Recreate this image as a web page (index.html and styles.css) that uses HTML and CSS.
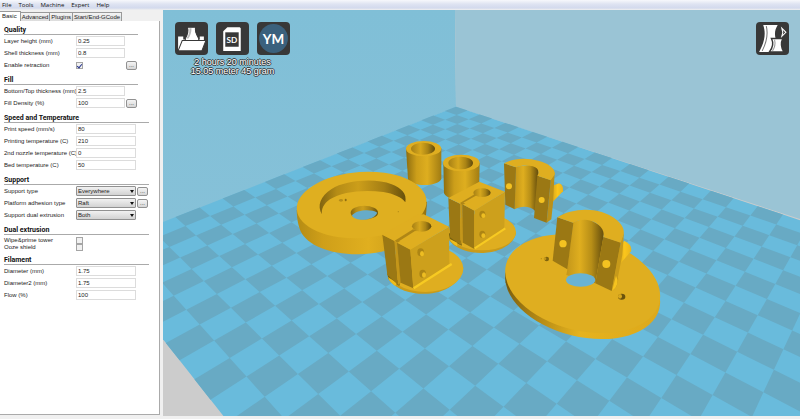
FILE: index.html
```html
<!DOCTYPE html>
<html lang="en">
<head>
<meta charset="utf-8">
<title>Print settings</title>
<link rel="stylesheet" href="styles.css">
</head>
<body>
<nav class="menubar">
  <button type="button">File</button>
  <button type="button">Tools</button>
  <button type="button">Machine</button>
  <button type="button">Expert</button>
  <button type="button">Help</button>
</nav>
<main class="workspace">
  <aside class="sidebar">
    <div class="tabs" role="tablist">
      <button type="button" role="tab" class="tab active" aria-selected="true">Basic</button>
      <button type="button" role="tab" class="tab">Advanced</button>
      <button type="button" role="tab" class="tab">Plugins</button>
      <button type="button" role="tab" class="tab">Start/End-GCode</button>
    </div>
    <form class="panel">
      <section class="group narrow">
        <h2>Quality</h2>
        <div class="row"><label for="layer">Layer height (mm)</label><input id="layer" type="text" value="0.25"></div>
        <div class="row"><label for="shell">Shell thickness (mm)</label><input id="shell" type="text" value="0.8"></div>
        <div class="row"><label for="retract">Enable retraction</label><input id="retract" type="checkbox" checked><button type="button" class="more" aria-label="Retraction settings">...</button></div>
      </section>
      <section class="group narrow">
        <h2>Fill</h2>
        <div class="row"><label for="bottom">Bottom/Top thickness (mm)</label><input id="bottom" type="text" value="2.5"></div>
        <div class="row"><label for="density">Fill Density (%)</label><input id="density" type="text" value="100"><button type="button" class="more" aria-label="Fill settings">...</button></div>
      </section>
      <section class="group">
        <h2>Speed and Temperature</h2>
        <div class="row"><label for="speed">Print speed (mm/s)</label><input id="speed" type="text" value="80"></div>
        <div class="row"><label for="temp">Printing temperature (C)</label><input id="temp" type="text" value="210"></div>
        <div class="row"><label for="temp2">2nd nozzle temperature (C)</label><input id="temp2" type="text" value="0"></div>
        <div class="row"><label for="bed">Bed temperature (C)</label><input id="bed" type="text" value="50"></div>
      </section>
      <section class="group">
        <h2>Support</h2>
        <div class="row"><label for="support">Support type</label><span class="drop"><select id="support"><option>Everywhere</option></select></span><button type="button" class="more" aria-label="Support settings">...</button></div>
        <div class="row"><label for="adhesion">Platform adhesion type</label><span class="drop"><select id="adhesion"><option>Raft</option></select></span><button type="button" class="more" aria-label="Adhesion settings">...</button></div>
        <div class="row"><label for="dual">Support dual extrusion</label><span class="drop"><select id="dual"><option>Both</option></select></span></div>
      </section>
      <section class="group tight">
        <h2>Dual extrusion</h2>
        <div class="row"><label for="wipe">Wipe&amp;prime tower</label><input id="wipe" type="checkbox"></div>
        <div class="row"><label for="ooze">Ooze shield</label><input id="ooze" type="checkbox"></div>
      </section>
      <section class="group">
        <h2>Filament</h2>
        <div class="row"><label for="dia">Diameter (mm)</label><input id="dia" type="text" value="1.75"></div>
        <div class="row"><label for="dia2">Diameter2 (mm)</label><input id="dia2" type="text" value="1.75"></div>
        <div class="row"><label for="flow">Flow (%)</label><input id="flow" type="text" value="100"></div>
      </section>
    </form>
  </aside>
  <section class="viewport">
    <svg class="scene" viewBox="163 10 637 406" preserveAspectRatio="xMinYMin slice" role="img" aria-label="Printer platform with seven parts">
      <defs>
        <linearGradient id="wallL" x1="0" y1="0" x2="0" y2="1"><stop offset="0" stop-color="#80bfd7"/><stop offset="1" stop-color="#86c1d8"/></linearGradient>
        <linearGradient id="rim"><stop offset="0" stop-color="#b48b14"/><stop offset=".2" stop-color="#cf9f19"/><stop offset=".55" stop-color="#e0af1f"/><stop offset=".9" stop-color="#c59818"/><stop offset="1" stop-color="#8f6e10"/></linearGradient>
        <linearGradient id="recess"><stop offset="0" stop-color="#806310"/><stop offset=".2" stop-color="#b58c16"/><stop offset=".45" stop-color="#cc9e1a"/><stop offset=".75" stop-color="#a47e14"/><stop offset="1" stop-color="#66500c"/></linearGradient>
        <linearGradient id="tube"><stop offset="0" stop-color="#8d6d10"/><stop offset=".3" stop-color="#cc9e1a"/><stop offset=".6" stop-color="#deae1f"/><stop offset="1" stop-color="#a17c13"/></linearGradient>
        <linearGradient id="bore"><stop offset="0" stop-color="#a68015"/><stop offset=".4" stop-color="#d6a71d"/><stop offset=".7" stop-color="#aa8415"/><stop offset="1" stop-color="#604a0b"/></linearGradient>
        <linearGradient id="half"><stop offset="0" stop-color="#c3961a"/><stop offset=".35" stop-color="#dfae1f"/><stop offset=".65" stop-color="#b78e17"/><stop offset=".9" stop-color="#765b0f"/><stop offset="1" stop-color="#5e490b"/></linearGradient>
        <linearGradient id="discSide"><stop offset="0" stop-color="#775b0d"/><stop offset=".25" stop-color="#ae8515"/><stop offset=".55" stop-color="#e6b31e"/><stop offset="1" stop-color="#dda91b"/></linearGradient>
        <linearGradient id="lug"><stop offset="0" stop-color="#d6a51b"/><stop offset=".5" stop-color="#fbc61c"/><stop offset="1" stop-color="#e9b51c"/></linearGradient>
      </defs>
      <rect x="163" y="10" width="637" height="406" fill="#ccc"/>
      <path fill="url(#wallL)" d="M163 10H455L456 107 163 223Z"/>
      <path fill="#9ac4d5" d="M455 10H800V219L456 107Z"/>
      <path id="floor" fill="#69bbdc"/>
      <path id="tiles" fill="#68aac4"/>

      <g transform="translate(280 130) scale(.33333)">
        <path fill="url(#tube)" d="M378 55L384 147C394 171 472 171 484 147L484 55Z"/>
        <ellipse cx="431" cy="56" rx="53" ry="23" fill="#dfae20"/>
        <ellipse cx="429" cy="56" rx="36" ry="18" fill="url(#bore)"/>
        <path fill="url(#tube)" d="M490 99L492 190C510 220 570 215 597 190L599 99Z"/>
        <ellipse cx="544" cy="99" rx="55" ry="25" fill="#dfae20"/>
        <ellipse cx="542" cy="99" rx="37" ry="19" fill="url(#bore)"/>

        <path fill="url(#rim)" d="M50 240C51 272 56 290 62 304C80 345 150 374 235 373C330 371 420 335 436 282L441 215Z"/>
        <ellipse cx="245" cy="225" rx="195" ry="99" fill="#dfaf20" transform="rotate(-4 245 225)"/>
        <path fill="url(#recess)" d="M126 253C110 228 121 198 155 177C195 151 285 143 335 163C365 175 381 191 376 217C366 202 340 191 310 186C250 178 185 185 150 208C130 222 124 237 126 253Z"/>
        <ellipse cx="253" cy="248" rx="41" ry="21" fill="url(#recess)"/>
        <path fill="#66abc9" d="M216 256C228 240 272 235 292 248C284 264 262 270 242 269C228 268 218 264 216 256Z"/>
        <ellipse cx="183" cy="211" rx="6" ry="4" fill="#b68d18"/><ellipse cx="197" cy="210" rx="3" ry="4" fill="#8f6e12"/>
        <circle cx="355" cy="245" r="2" fill="#b68d18"/>

        <path fill="#c99b19" d="M505 310V328C525 358 570 370 610 369C670 366 706 335 708 306Z"/>
        <ellipse cx="607" cy="306" rx="101" ry="55" fill="#dfae20"/>
        <path fill="#77600f" d="M506 308L545 334V347L510 329Z"/>
        <path fill="#efbd1c" d="M508 326L532 338V349Q514 339 508 326Z"/>
        <path fill="#9b7814" d="M505 204L540 221 542 345 510 322Z"/>
        <path fill="#c4961a" d="M540 220L548 223 550 337 542 343Z"/>
        <path fill="#9b7814" d="M547 223L583 241 583 357 549 338Z"/>
        <path fill="#cda01c" d="M583 241L675 185 673 294 583 357Z"/>
        <path fill="#dfae20" d="M505 204L598 155 675 185 583 242 547 223 540 221Z"/>
        <path fill="#af8616" d="M540 219L585 192 597 198 547 225Z"/>
        <path fill="#dfae20" d="M550 218L590 196 604 200 560 223Z"/>
        <ellipse cx="606" cy="188" rx="26" ry="13" fill="url(#bore)"/>
        <path stroke="#f7ca22" stroke-width="6" d="M584 355L676 295"/>
        <g><ellipse cx="607" cy="253" rx="9" ry="11" fill="#ad8514"/><ellipse cx="610" cy="257" rx="6" ry="7" fill="#edbd22"/><ellipse cx="607" cy="313" rx="9" ry="11" fill="#ad8514"/><ellipse cx="610" cy="317" rx="6" ry="7" fill="#edbd22"/></g>

        <path fill="#c99b19" d="M322 430L326 449C355 483 400 494 445 491C510 487 547 447 550 412Z"/>
        <ellipse cx="436" cy="416" rx="114" ry="70" fill="#dfae20"/>
        <path fill="#77600f" d="M322 430L360 456 358 468 325 446Z"/>
        <path fill="#efbd1c" d="M323 441L351 458 346 468Q330 457 323 441Z"/>
        <path fill="#9b7814" d="M307 314L344 332 354 465 322 434Z"/>
        <path fill="#c4961a" d="M343 331L352 336 363 458 354 465Z"/>
        <path fill="#9b7814" d="M351 337L391 358 400 475 362 458Z"/>
        <path fill="#cda01c" d="M391 358L507 290 508 402 400 476Z"/>
        <path fill="#dfae20" d="M307 314L411 255 431 253 507 290 391 359 351 338 343 333Z"/>
        <path fill="#af8616" d="M344 332L399 298 412 302 352 338Z"/>
        <path fill="#dfae20" d="M358 333L405 303 423 306 371 341Z"/>
        <ellipse cx="425" cy="289" rx="29" ry="16" fill="url(#bore)"/>
        <path stroke="#f7ca22" stroke-width="7" d="M401 475L515 402"/>
        <g><ellipse cx="422" cy="367" rx="10" ry="12" fill="#ad8514"/><ellipse cx="426" cy="371" rx="6" ry="8" fill="#edbd22"/><ellipse cx="428" cy="431" rx="10" ry="12" fill="#ad8514"/><ellipse cx="432" cy="435" rx="6" ry="8" fill="#edbd22"/></g>
      </g>

      <g transform="translate(490 140) scale(.33333)">
        <path fill="url(#lug)" d="M186 138L207 130Q221 134 219 154L187 187Z"/>
        <path fill="url(#half)" d="M77 80L143 72 147 108 135 212C122 198 92 197 74 208Z"/>
        <path fill="#9b7814" d="M42 70L78 82 74 208 46 194Z"/>
        <path fill="#bb9018" d="M182 120L194 97 189 190 184 238 170 248Z"/>
        <path fill="#9b7814" d="M142 107L182 120 170 248 132 234Z"/>
        <path fill="#dfae20" d="M42 70C70 54 110 52 145 62C175 69 198 87 194 104L182 121 142 107C150 95 144 83 128 79C110 75 92 77 78 82Z"/>
        <circle cx="57" cy="139" r="9" fill="#f4c221"/><circle cx="155" cy="180" r="9" fill="#f4c221"/>

        <ellipse cx="278" cy="449" rx="237" ry="141" fill="url(#discSide)" transform="rotate(14 278 449)"/>
        <path fill="#765b0d" d="M47 400V428L60 455V400Z"/>
        <path fill="#d8a81b" d="M508 455V470L500 490V455Z"/>
        <ellipse cx="278" cy="431" rx="237" ry="141" fill="#dfae20" transform="rotate(14 278 431)"/>
        <ellipse cx="170" cy="357" rx="7" ry="7" fill="#80640f"/><circle cx="165" cy="356" r="4" fill="#c49719"/><circle cx="154" cy="356" r="2" fill="#b68d18"/>
        <ellipse cx="395" cy="470" rx="11" ry="9" fill="#6b530d"/><ellipse cx="390" cy="469" rx="6" ry="7" fill="#d8a81d"/>
        <path fill="url(#lug)" d="M394 318L402 302Q428 314 423 334L384 379Z"/>
        <path fill="url(#half)" d="M249 246L290 234 345 265 340 292 316 430 229 405 232 388Z"/>
        <ellipse cx="272" cy="420" rx="44" ry="20" fill="#69b3d3"/>
        <path fill="#9b7814" d="M202 232L250 248 232 388 188 362Z"/>
        <path fill="#c79a1a" d="M392 307L402 275 397 345 384 410Q388 438 366 453Z"/>
        <path fill="#f6c31f" d="M378 407Q392 433 366 453Z"/>
        <path fill="#9b7814" d="M340 290L392 307 365 453 316 430Z"/>
        <path fill="#dfae20" d="M202 232C235 210 290 202 335 216C378 230 406 258 401 281L392 308 340 291C346 270 326 248 302 242C283 236 265 240 249 248Z"/>
        <circle cx="219" cy="311" r="11" fill="#f4c221"/><circle cx="349" cy="372" r="12" fill="#f4c221"/>
      </g>
    </svg>
    <div class="overlay">
      <div class="job">
        <div class="tools">
          <button type="button" class="tool" aria-label="Load model">
            <svg viewBox="0 0 32 32"><path fill="#fff" d="M3 14h5v3h16v-3h4v6H8l-5 8z"/><path fill="#fff" stroke="#383838" d="M12 5h8c-1 3 0 6 3 11v2H10v-2c3-5 3-8 2-11z"/><path fill="#bbb" d="M14 6h2c0 4-1 7-3 10h-2c3-4 3-7 3-10z"/><path fill="#fff" stroke="#383838" d="M7 18h23l-4 10H3z"/></svg>
          </button>
          <button type="button" class="tool" aria-label="Save to SD card">
            <svg viewBox="0 0 32 32"><path fill="#fff" d="M11 5h12l1 1v22H7V9z"/><path fill="#383838" d="M9 10h13v14H9z"/><text x="15.5" y="20" class="sd">SD</text></svg>
          </button>
          <button type="button" class="tool" aria-label="Share on YouMagine">
            <svg viewBox="0 0 32 32"><circle cx="16" cy="16" r="14" fill="#3b617d"/><text x="16" y="21" class="ym">YM</text></svg>
          </button>
        </div>
        <p class="estimate">2 hours 20 minutes<br>15.05 meter 45 gram</p>
      </div>
      <button type="button" class="tool" aria-label="View mode">
        <svg viewBox="0 0 32 32"><path fill="#fff" d="M7 3h14c-3 5-3 9-2 13v13H3c5-9 7-17 4-26z"/><path fill="none" stroke="#777" d="M10 4c2 8 0 16-4 24"/><path fill="#fff" stroke="#383838" stroke-width="1.4" d="M15 16h11c-2 4-2 8 1 13H13c4-5 4-9 2-13z"/><path fill="none" stroke="#999" d="M18 17c1 4 0 8-2 11"/><path fill="none" stroke="#fff" d="M25 6l4 4-4 4 1-4z"/></svg>
      </button>
    </div>
  </section>
</main>
<script src="floor.js"></script>
</body>
</html>
```
FILE: styles.css
```css
* { box-sizing: border-box; }
body {
  margin: 0;
  min-height: 100vh;
  display: flex;
  flex-direction: column;
  background: #f0f0f0;
  color: #222;
  font: 6px/8px "Liberation Sans", sans-serif;
}
button, input, select { font: inherit; color: inherit; margin: 0; padding: 0; }

.menubar {
  display: flex;
  gap: 7px;
  height: 10px;
  padding: 0 2px 1px;
  background: linear-gradient(#f7f8fc, #dfe4f2 40%, #d3daed 80%, #f0f0f0);
  font: 6px/8px "Open Sans", sans-serif;
}
.menubar button { border: 0; background: none; color: #111; }

.workspace { flex: 1; display: flex; margin-bottom: 3px; }
.sidebar {
  flex: none;
  width: 163px;
  display: flex;
  flex-direction: column;
  padding: 1px 3px 1px 0;
}
.tabs { display: flex; align-items: flex-end; height: 10px; }
.tab {
  height: 9px;
  padding: 0 1px;
  border: 1px solid #999;
  border-left-width: 0;
  border-bottom: 0;
  background: linear-gradient(#f4f4f4, #dcdcdc);
  line-height: 7px;
  white-space: nowrap;
}
.tab.active { height: 10px; background: #fff; padding: 0 3px 0 2px; }
.panel {
  flex: 1;
  display: flex;
  flex-direction: column;
  gap: 5px;
  padding: 4px;
  background: #fff;
  border-right: 1px solid #aaa;
  border-bottom: 1px solid #aaa;
}
.group { display: grid; gap: 2px; width: 145px; --field: 60px; }
.group.narrow { width: 134px; --field: 49px; }
.group.tight { gap: 0; }
h2 {
  margin: 0 0 -1px;
  height: 10px;
  border-bottom: 1px solid #aaa;
  color: #111;
  font: bold 7px/10px Roboto, sans-serif;
}
.tight h2 { margin-bottom: 1px; }
.row {
  display: grid;
  grid-template-columns: 71px var(--field) 11px;
  column-gap: 1px;
  align-items: center;
  height: 10px;
  white-space: nowrap;
}
.tight .row { height: 7px; }
.row input[type="text"] {
  width: 100%;
  height: 10px;
  padding: 0 1px;
  border: 1px solid #dcdcdc;
  background: none;
}
.row input[type="checkbox"] {
  appearance: none;
  width: 7px;
  height: 7px;
  border: 1px solid #a5a5a5;
  background: #f1f1f1;
  display: grid;
}
.row input[type="checkbox"]:checked::after {
  content: "";
  width: 2px;
  height: 4px;
  margin-left: 1px;
  border: solid #24328c;
  border-width: 0 1px 1px 0;
  transform: rotate(40deg);
}
.drop { display: grid; align-items: center; }
.drop > *, .drop::after { grid-area: 1 / 1; }
.drop select {
  appearance: none;
  width: 100%;
  height: 10px;
  padding: 0 1px;
  border: 1px solid #919191;
  border-radius: 1px;
  background: linear-gradient(#f1f1f1, #d2d2d2);
  line-height: 8px;
}
.drop::after {
  content: "";
  justify-self: end;
  margin-right: 2px;
  border: 2px solid transparent;
  border-top: 3px solid #111;
  border-bottom: 0;
  pointer-events: none;
}
.more {
  height: 9px;
  border: 1px solid #919191;
  border-radius: 2px;
  background: linear-gradient(#f4f4f4, #d6d6d6);
  line-height: 5px;
}

.viewport { flex: 1; position: relative; overflow: hidden; }
.scene { position: absolute; inset: 0; width: 100%; height: 100%; }
.overlay {
  position: absolute;
  inset: 12px 11px auto 12px;
  display: flex;
  justify-content: space-between;
  align-items: flex-start;
}
.tools { display: flex; gap: 8px; }
.tool {
  width: 33px;
  height: 33px;
  border: 0;
  border-radius: 4px;
  background: #383838;
}
.tool svg { display: block; width: 100%; height: 100%; }
.sd, .ym { fill: #fff; text-anchor: middle; font: bold 8px Lato, sans-serif; }
.ym { font-size: 13px; }
.estimate {
  margin: 3px 0 0;
  text-align: center;
  color: #fff;
  font: 9px/9px "Liberation Sans", sans-serif;
  text-shadow: 1px 0 #333, -1px 0 #333, 0 1px #333, 0 -1px #333;
}
```
FILE: floor.js
```js
// Perspective projection of the build platform: u runs towards the viewer
// along the left wall, v along the right wall, both counted in tiles.
const corner = [456, 106.7];
const vanishU = [995, -105.3];
const vanishV = [-187, -105.3];
const depth = 20;
const breadth = 32;

function project(u, v) {
  const p = -0.02014 * u;
  const q = -0.01774 * v;
  const w = 1 + p + q;
  return [0, 1]
    .map(i => ((corner[i] + p * vanishU[i] + q * vanishV[i]) / w).toFixed(1))
    .join(" ");
}

function quad(u0, v0, u1, v1) {
  return "M" + [project(u0, v0), project(u1, v0), project(u1, v1), project(u0, v1)].join("L") + "Z";
}

let dark = "";
for (let u = 0; u < depth; u++) {
  for (let v = u % 2; v < breadth; v += 2) {
    dark += quad(u, v, u + 1, v + 1);
  }
}
document.getElementById("floor").setAttribute("d", quad(0, 0, depth, breadth));
document.getElementById("tiles").setAttribute("d", dark);
```
